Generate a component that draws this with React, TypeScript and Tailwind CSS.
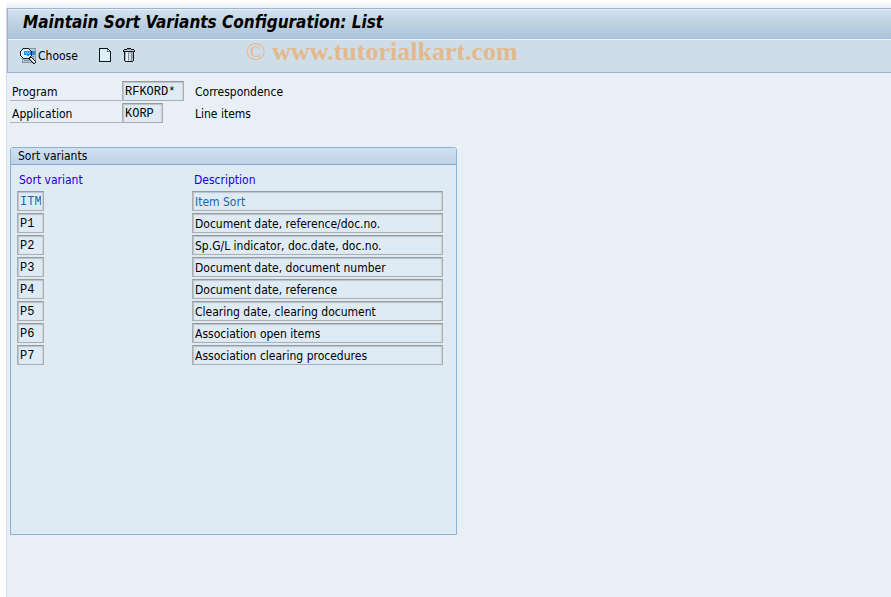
import React from 'react';

interface Variant {
  id: string;
  description: string;
  active?: boolean;
}

interface SelectionField {
  id: string;
  label: string;
  value: string;
  text: string;
  width: string;
}

const fields: SelectionField[] = [
  { id: 'program', label: 'Program', value: 'RFKORD*', text: 'Correspondence', width: 'w-[62px]' },
  { id: 'application', label: 'Application', value: 'KORP', text: 'Line items', width: 'w-[41px]' },
];

const variants: Variant[] = [
  { id: 'ITM', description: 'Item Sort', active: true },
  { id: 'P1', description: 'Document date, reference/doc.no.' },
  { id: 'P2', description: 'Sp.G/L indicator, doc.date, doc.no.' },
  { id: 'P3', description: 'Document date, document number' },
  { id: 'P4', description: 'Document date, reference' },
  { id: 'P5', description: 'Clearing date, clearing document' },
  { id: 'P6', description: 'Association open items' },
  { id: 'P7', description: 'Association clearing procedures' },
];

const fieldBox =
  'block h-5 border border-[#adadad] border-t-[#969a9d] bg-[#deebf5] px-[2px] pt-[2px] shadow-[inset_1px_1px_1px_#b9c3ca,inset_-1px_0_1px_#c8d2d9] outline-none';
const mono = "font-['Liberation_Mono',monospace]";

const ChooseIcon = () => (
  <svg width="16" height="16" viewBox="0 0 16 16" shapeRendering="crispEdges" aria-hidden="true">
    <path d="M2 0h14v15H2z" fill="#8594a6" />
    <path d="M3 1h12v13H3z" fill="#b9c9d6" />
    <path d="M12 8h2v1h-2zM4 12h5v1H4zM13 10h1v1h-1z" fill="#7589a0" />
    <path d="M11 3h4v4h-4z" fill="#2d86cc" />
    <path d="M3 1h6v1h1v1h1v5h-1v1H9v1H3V9H2V8H1V3h1V2h1z" fill="#d9eefb" />
    <path d="M4 3h7v4H9v1H7V7H4z" fill="#2490ea" />
    <path d="M5 4h1v1H5zM7 4h1v1H7zM9 4h1v1H9zM6 5h1v1H6zM8 5h1v1H8z" fill="#7fcaff" />
    <path
      d="M3 0h6v1H3zM2 1h1v1H2zM9 1h1v1H9zM1 2h1v1H1zM10 2h1v1h-1zM0 3h1v5H0zM11 3h1v5h-1zM1 8h1v1H1zM10 8h1v1h-1zM2 9h1v1H2zM9 9h1v1H9zM3 10h6v1H3z"
      fill="#15202b"
    />
    <path d="M9 9h3v1h1v1h1v1h1v1h1v2h-1v1h-2v-1h-1v-1h-1v-1h-1v-1H9z" fill="#111820" />
    <path d="M10 10h2v1h1v1h1v1h1v2h-2v-1h-1v-1h-1v-1h-1z" fill="#f5fbff" />
    <path d="M10 11h1v1h1v1h1v1h1v1h-1v-1h-1v-1h-1v-1h-1z" fill="#8995a3" />
  </svg>
);

const CreateIcon = () => (
  <svg width="12" height="14" viewBox="0 0 12 14" shapeRendering="crispEdges" aria-hidden="true">
    <path d="M0 0h9v1h1v1h1v1h1v11H0z" fill="#10151a" />
    <path d="M1 1h7v3h3v9H1z" fill="#def0fb" />
    <path d="M9 2h1v1h-1z" fill="#ffffff" />
    <path d="M8 1h1v2h2v1H8z" fill="#647482" />
  </svg>
);

const DeleteIcon = () => (
  <svg width="12" height="14" viewBox="0 0 12 14" shapeRendering="crispEdges" aria-hidden="true">
    <path d="M4 0h4v1h3v1h1v2h-1v9h-1v1H2v-1H1V4H0V2h1V1h3z" fill="#11161b" />
    <path d="M4 1h4v1H4z" fill="#8b98a3" />
    <path d="M1 2h10v1H1z" fill="#c4d0da" />
    <path d="M2 4h8v9H2z" fill="#a9b2c3" />
    <path d="M3 4h2v9H3z" fill="#edf3fa" />
    <path d="M6 5h2v8H6z" fill="#d5dce8" />
    <path d="M5 5h1v7H5zM8 5h1v7H8z" fill="#7f879b" />
  </svg>
);

const Header: React.FC = () => (
  <header className="relative border-y border-l border-[#9fb2c9]">
    <div className="flex h-[30px] items-center border-t border-[#e5f0f9] bg-gradient-to-b from-[#d2e2f0] via-[#bdd0df] to-[#a9c2dd] px-[15px]">
      <h1 className="pb-[5px] font-['DejaVu_Sans_Condensed','DejaVu_Sans',sans-serif] text-[17px] leading-6 font-bold italic">
        Maintain Sort Variants Configuration: List
      </h1>
    </div>
    <div className="flex h-[33px] items-center border-t border-[#eaf3fa] bg-[#cfdde8] px-3">
      <button type="button" className="flex items-center gap-[2px]">
        <ChooseIcon />
        <span>Choose</span>
      </button>
      <button type="button" aria-label="Create" className="ml-[21px] pb-[2px]">
        <CreateIcon />
      </button>
      <button type="button" aria-label="Delete" className="ml-3 pb-[2px]">
        <DeleteIcon />
      </button>
    </div>
    <div className="pointer-events-none absolute top-7 left-[238px] font-['Liberation_Serif',serif] text-[26px] leading-[30px] whitespace-nowrap text-[#e4b98c]">
      © <span className="font-bold">www.tutorialkart.com</span>
    </div>
  </header>
);

const SortVariants: React.FC = () => (
  <section className="mt-6 min-h-[388px] max-w-[447px] rounded-t-[3px] border border-[#8db1d3] bg-[#deeaf4]">
    <h2 className="h-[17px] rounded-t-[2px] border-b border-[#86a9cc] bg-gradient-to-b from-[#d0e0ef] to-[#bdd3e9] px-[7px] leading-4">
      Sort variants
    </h2>
    <table className="mt-1 ml-[6px] border-collapse">
      <thead>
        <tr className="h-[22px] text-left text-[#1400e6]">
          <th className="w-[175px] px-[2px] py-0 font-normal">Sort variant</th>
          <th className="px-[2px] py-0 font-normal">Description</th>
        </tr>
      </thead>
      <tbody>
        {variants.map((v) => (
          <tr key={v.id} className={v.active ? 'text-[#1c68a6]' : 'text-black'}>
            <td className="p-0 pb-[2px]">
              <input readOnly aria-label="Sort variant" value={v.id} className={`${fieldBox} ${mono} w-[27px]`} />
            </td>
            <td className="p-0 pb-[2px]">
              <input
                readOnly
                aria-label={`Description ${v.id}`}
                value={v.description}
                className={`${fieldBox} w-[251px]`}
              />
            </td>
          </tr>
        ))}
      </tbody>
    </table>
  </section>
);

export default function App() {
  return (
    <div className="min-h-screen bg-gradient-to-r from-white to-[#f4f7fb] pl-[6px] font-['DejaVu_Sans_Condensed','DejaVu_Sans',sans-serif] text-xs text-black">
      <div className="h-2 bg-gradient-to-b from-white to-[#e9eff7]" />
      <div className="min-h-[calc(100vh-8px)] border-l border-[#d3dde8] bg-[#e8eff7]">
        <Header />
        <main className="px-[3px] pt-2">
          <div className="flex flex-col gap-[2px]">
            {fields.map((f) => (
              <div key={f.id} className="flex h-5">
                <label htmlFor={f.id} className="w-28 border-b border-[#b3b3b3] pl-[2px] leading-[22px]">
                  {f.label}
                </label>
                <div className="w-[73px]">
                  <input id={f.id} readOnly value={f.value} className={`${fieldBox} ${mono} ${f.width}`} />
                </div>
                <span className="leading-[22px]">{f.text}</span>
              </div>
            ))}
          </div>
          <SortVariants />
        </main>
      </div>
    </div>
  );
}
